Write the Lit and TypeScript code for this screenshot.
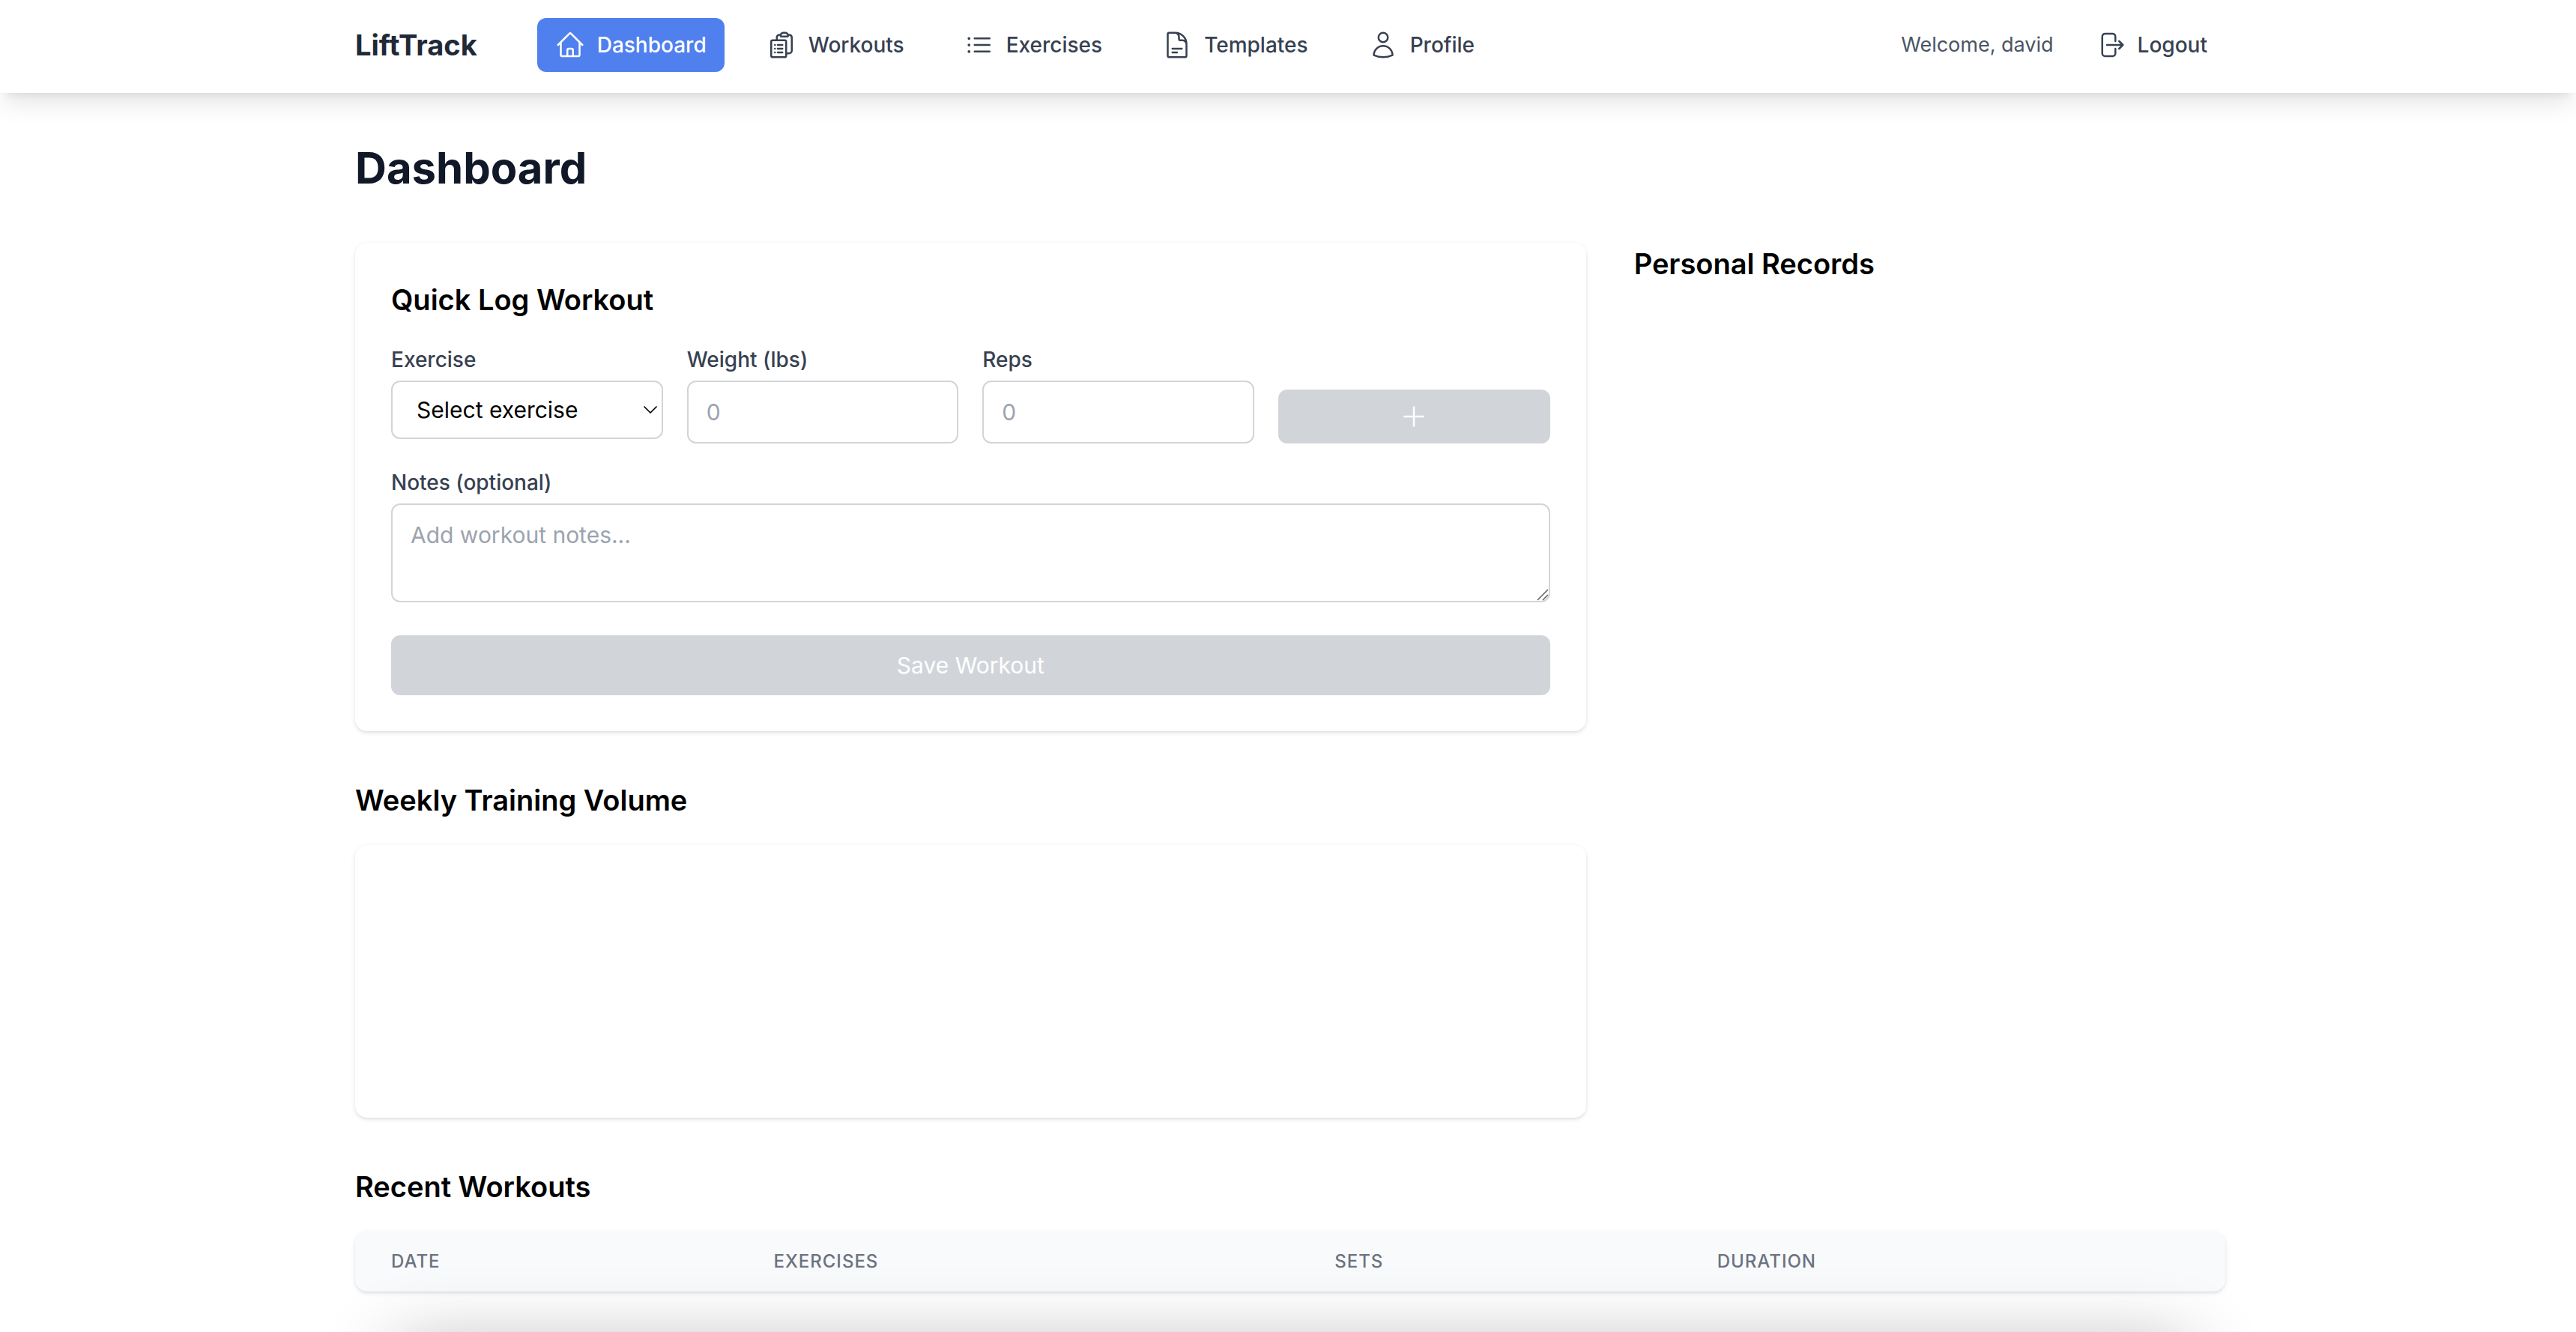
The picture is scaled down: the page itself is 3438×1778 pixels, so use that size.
import { LitElement, html, css, svg, nothing } from "lit";
import { customElement, state } from "lit/decorators.js";

const ICONS = {
  home: svg`<path d="M2.25 12l8.954-8.955c.44-.439 1.152-.439 1.591 0L21.75 12M4.5 9.75v10.125c0 .621.504 1.125 1.125 1.125H9.75v-4.875c0-.621.504-1.125 1.125-1.125h2.25c.621 0 1.125.504 1.125 1.125V21h4.125c.621 0 1.125-.504 1.125-1.125V9.75M8.25 21h8.25"/>`,
  clipboard: svg`<path d="M9 12h3.75M9 15h3.75M9 18h3.75m3 .75H18a2.25 2.25 0 002.25-2.25V6.108c0-1.135-.845-2.098-1.976-2.192a48.424 48.424 0 00-1.123-.08m-5.801 0c-.065.21-.1.433-.1.664 0 .414.336.75.75.75h4.5a.75.75 0 00.75-.75 2.25 2.25 0 00-.1-.664m-5.8 0A2.251 2.251 0 0113.5 2.25H15c1.012 0 1.867.668 2.15 1.586m-5.8 0c-.376.023-.75.05-1.124.08C9.095 4.01 8.25 4.973 8.25 6.108V8.25m0 0H4.875c-.621 0-1.125.504-1.125 1.125v11.25c0 .621.504 1.125 1.125 1.125h9.75c.621 0 1.125-.504 1.125-1.125V9.375c0-.621-.504-1.125-1.125-1.125H8.25zM6.75 12h.008v.008H6.75V12zm0 3h.008v.008H6.75V15zm0 3h.008v.008H6.75V18z"/>`,
  list: svg`<path d="M8.25 6.75h12M8.25 12h12m-12 5.25h12M3.75 6.75h.007v.008H3.75V6.75zm.375 0a.375.375 0 11-.75 0 .375.375 0 01.75 0zM3.75 12h.007v.008H3.75V12zm.375 0a.375.375 0 11-.75 0 .375.375 0 01.75 0zm-.375 5.25h.007v.008H3.75v-.008zm.375 0a.375.375 0 11-.75 0 .375.375 0 01.75 0z"/>`,
  document: svg`<path d="M19.5 14.25v-2.625a3.375 3.375 0 00-3.375-3.375h-1.5A1.125 1.125 0 0113.5 7.125v-1.5a3.375 3.375 0 00-3.375-3.375H8.25m0 12.75h7.5m-7.5 3H12M10.5 2.25H5.625c-.621 0-1.125.504-1.125 1.125v17.25c0 .621.504 1.125 1.125 1.125h12.75c.621 0 1.125-.504 1.125-1.125V11.25a9 9 0 00-9-9z"/>`,
  user: svg`<path d="M15.75 6a3.75 3.75 0 11-7.5 0 3.75 3.75 0 017.5 0zM4.501 20.118a7.5 7.5 0 0114.998 0A17.933 17.933 0 0112 21.75c-2.676 0-5.216-.584-7.499-1.632z"/>`,
  logout: svg`<path d="M15.75 9V5.25A2.25 2.25 0 0013.5 3h-6a2.25 2.25 0 00-2.25 2.25v13.5A2.25 2.25 0 007.5 21h6a2.25 2.25 0 002.25-2.25V15m3 0l3-3m0 0l-3-3m3 3H9"/>`,
  plus: svg`<path d="M12 4.5v15m7.5-7.5h-15"/>`,
};

type IconName = keyof typeof ICONS;

const icon = (name: IconName) => html`
  <svg class="icon" viewBox="0 0 24 24" fill="none" stroke="currentColor" stroke-width="1.5"
    stroke-linecap="round" stroke-linejoin="round" aria-hidden="true">${ICONS[name]}</svg>`;

const NAV: { label: string; icon: IconName }[] = [
  { label: "Dashboard", icon: "home" },
  { label: "Workouts", icon: "clipboard" },
  { label: "Exercises", icon: "list" },
  { label: "Templates", icon: "document" },
  { label: "Profile", icon: "user" },
];

const shared = css`
  :host {
    display: block;
    box-sizing: border-box;
  }
  *,
  *::before,
  *::after {
    box-sizing: border-box;
  }
  h1, h2 {
    margin: 0;
  }
  h2 {
    font-size: 38px;
    line-height: 56px;
    font-weight: 600;
    color: #000;
  }
  .icon {
    display: block;
    width: 40px;
    height: 40px;
    flex: none;
  }
`;

@customElement("nav-bar")
class NavBar extends LitElement {
  static styles = [
    shared,
    css`
      .bar {
        padding-left: 6px;
        background: #fff;
        box-shadow: 0 20px 30px -6px rgb(0 0 0 / 0.1), 0 8px 12px -8px rgb(0 0 0 / 0.1);
      }
      .inner {
        display: flex;
        align-items: center;
        max-width: 2560px;
        margin: 0 auto;
        padding: 24px 32px 28px;
      }
      .logo {
        font-size: 38px;
        line-height: 56px;
        font-weight: 700;
        color: #1f2937;
      }
      .links {
        display: flex;
        gap: 32px;
        margin-left: 80px;
      }
      .user {
        display: flex;
        align-items: center;
        gap: 32px;
        margin-left: auto;
        font-size: 27px;
        line-height: 40px;
        color: #4b5563;
      }
      .item {
        display: flex;
        align-items: center;
        gap: 16px;
        padding: 16px 24px;
        border: 0;
        border-radius: 12px;
        background: none;
        font: inherit;
        font-size: 28px;
        line-height: 40px;
        font-weight: 500;
        color: #374151;
        text-decoration: none;
      }
      .item.active {
        background: #4f80ee;
        color: #fff;
      }
    `,
  ];

  render() {
    return html`
      <header class="bar">
        <div class="inner">
          <span class="logo">LiftTrack</span>
          <nav class="links">
            ${NAV.map(
              (n, i) => html`<a class="item ${i === 0 ? "active" : ""}" href="#${n.label.toLowerCase()}"
                aria-current=${i === 0 ? "page" : nothing}>${icon(n.icon)}<span>${n.label}</span></a>`
            )}
          </nav>
          <div class="user">
            <span>Welcome, david</span>
            <button class="item" type="button">${icon("logout")}<span>Logout</span></button>
          </div>
        </div>
      </header>
    `;
  }
}

@customElement("quick-log")
class QuickLog extends LitElement {
  static styles = [
    shared,
    css`
      .card {
        display: flex;
        flex-direction: column;
        padding: 48px;
        border-radius: 16px;
        background: #fff;
        box-shadow: 0 2px 6px rgb(0 0 0 / 0.1), 0 2px 4px -2px rgb(0 0 0 / 0.1);
      }
      .fields {
        display: grid;
        grid-template-columns: repeat(4, minmax(0, 1fr));
        gap: 32px;
        margin: 32px 0;
      }
      .field {
        display: flex;
        flex-direction: column;
        gap: 8px;
      }
      label {
        font-size: 28px;
        line-height: 40px;
        font-weight: 500;
        color: #374151;
      }
      input,
      select,
      textarea {
        width: 100%;
        margin: 0;
        padding: 16px 24px;
        border: 2px solid #d1d5da;
        border-radius: 12px;
        background: #fff;
        font: inherit;
        font-size: 30px;
        line-height: 48px;
        color: #000;
      }
      input {
        height: 84px;
      }
      input::placeholder,
      textarea::placeholder {
        color: #9ca3af;
        opacity: 1;
      }
      .stack {
        display: grid;
      }
      .stack > * {
        grid-area: 1 / 1;
      }
      select {
        appearance: none;
        height: 78px;
        padding: 0 40px 0 32px;
      }
      .chevron {
        align-self: center;
        justify-self: end;
        width: 18px;
        height: 10px;
        margin-right: 8px;
        pointer-events: none;
      }
      textarea {
        display: block;
        height: 132px;
        resize: vertical;
      }
      textarea::-webkit-resizer {
        background: none;
      }
      .grip {
        align-self: end;
        justify-self: end;
        width: 16px;
        height: 16px;
        margin: 0 2px 2px 0;
        pointer-events: none;
      }
      .action {
        display: flex;
        justify-content: center;
        width: 100%;
        padding: 16px 32px;
        border: 0;
        border-radius: 12px;
        background: #d1d5da;
        font: inherit;
        font-size: 30px;
        line-height: 48px;
        color: #fff;
      }
      .add {
        align-self: end;
      }
      .save {
        margin-top: 44px;
      }
    `,
  ];

  @state() private exercise = "";

  render() {
    return html`
      <form class="card" @submit=${(e: Event) => e.preventDefault()}>
        <h2>Quick Log Workout</h2>
        <div class="fields">
          <div class="field">
            <label for="exercise">Exercise</label>
            <div class="stack">
              <select id="exercise" .value=${this.exercise}
                @change=${(e: Event) => (this.exercise = (e.target as HTMLSelectElement).value)}>
                <option value="">Select exercise</option>
              </select>
              <svg class="chevron" viewBox="0 0 18 10" fill="none" stroke="#000" stroke-width="1.7"
                stroke-linecap="round" stroke-linejoin="round" aria-hidden="true">
                <path d="M1 1l8 8 8-8"/>
              </svg>
            </div>
          </div>
          <div class="field">
            <label for="weight">Weight (lbs)</label>
            <input id="weight" inputmode="decimal" placeholder="0" />
          </div>
          <div class="field">
            <label for="reps">Reps</label>
            <input id="reps" inputmode="numeric" placeholder="0" />
          </div>
          <button class="action add" type="button" aria-label="Add set" disabled>${icon("plus")}</button>
        </div>
        <div class="field">
          <label for="notes">Notes (optional)</label>
          <div class="stack">
            <textarea id="notes" rows="2" placeholder="Add workout notes..."></textarea>
            <svg class="grip" viewBox="0 0 16 16" fill="none" stroke="#666" stroke-width="1.6" aria-hidden="true">
              <path d="M1 15L15 1M8 15l7-7"/>
            </svg>
          </div>
        </div>
        <button class="action save" type="submit" disabled>Save Workout</button>
      </form>
    `;
  }
}

@customElement("recent-workouts")
class RecentWorkouts extends LitElement {
  static styles = [
    shared,
    css`
      .panel {
        margin-top: 32px;
        overflow: hidden;
        border-radius: 16px;
        background: #f9fafb;
        box-shadow: 0 2px 6px rgb(0 0 0 / 0.1), 0 2px 4px -2px rgb(0 0 0 / 0.1);
      }
      table {
        width: 100%;
        table-layout: fixed;
        border-collapse: collapse;
      }
      th {
        padding: 24px 48px;
        text-align: left;
        text-transform: uppercase;
        letter-spacing: 1px;
        font-size: 24px;
        line-height: 32px;
        font-weight: 500;
        color: #6b7280;
      }
      .narrow {
        width: 20.45%;
      }
      .wide {
        width: 30%;
      }
    `,
  ];

  render() {
    return html`
      <h2 id="recent">Recent Workouts</h2>
      <div class="panel">
        <table aria-labelledby="recent">
          <thead>
            <tr>
              <th class="narrow" scope="col">Date</th>
              <th class="wide" scope="col">Exercises</th>
              <th class="narrow" scope="col">Sets</th>
              <th scope="col">Duration</th>
            </tr>
          </thead>
        </table>
      </div>
    `;
  }
}

@customElement("app-root")
class AppRoot extends LitElement {
  static styles = [
    shared,
    css`
      :host {
        min-height: 100vh;
        background: #fff;
        font-family: Inter, "Liberation Sans", sans-serif;
      }
      .page {
        padding-left: 6px;
      }
      .content {
        max-width: 2560px;
        margin: 0 auto;
        padding: 64px 32px 0;
      }
      h1 {
        font-size: 58px;
        line-height: 72px;
        font-weight: 700;
        color: #111827;
      }
      .grid {
        display: grid;
        grid-template-columns: repeat(3, minmax(0, 1fr));
        gap: 64px;
        margin: 64px 0;
      }
      .main {
        grid-column: span 2;
        display: flex;
        flex-direction: column;
        gap: 64px;
      }
      .chart {
        height: 364px;
        margin-top: 32px;
        border-radius: 16px;
        background: #fff;
        box-shadow: 0 2px 6px rgb(0 0 0 / 0.1), 0 2px 4px -2px rgb(0 0 0 / 0.1);
      }
      .drawer {
        position: fixed;
        left: 50%;
        bottom: -120px;
        width: min(2390px, 90vw);
        height: 100px;
        transform: translateX(-50%);
        background: #fff;
        box-shadow: 6px 0 100px rgb(0 0 0 / 0.3);
        pointer-events: none;
      }
    `,
  ];

  render() {
    return html`
      <nav-bar></nav-bar>
      <div class="page">
        <main class="content">
          <h1>Dashboard</h1>
          <div class="grid">
            <div class="main">
              <quick-log></quick-log>
              <section>
                <h2>Weekly Training Volume</h2>
                <div class="chart"></div>
              </section>
            </div>
            <aside>
              <h2>Personal Records</h2>
            </aside>
          </div>
          <recent-workouts></recent-workouts>
        </main>
      </div>
      <div class="drawer"></div>
    `;
  }
}
